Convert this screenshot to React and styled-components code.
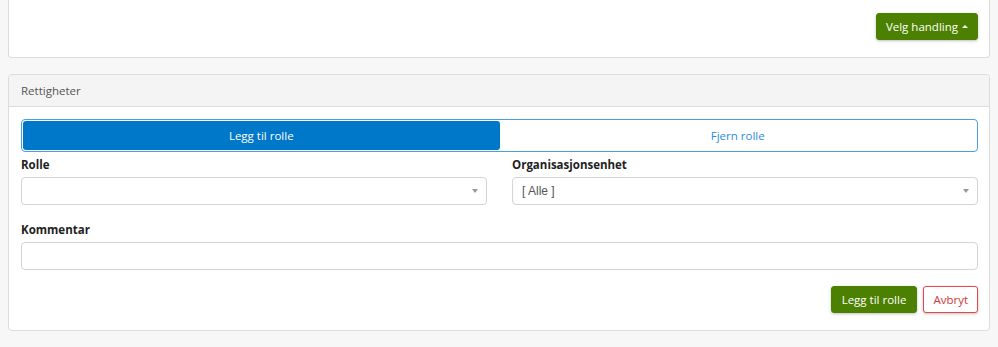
import React from "react";
import styled, { createGlobalStyle } from "styled-components";

const Global = createGlobalStyle`
  html, body { margin: 0; padding: 0; background: #f7f7f7; }
  body { font-family: "Open Sans", "Liberation Sans", sans-serif; font-size: 11.5px; color: #333; }
  * { box-sizing: border-box; }
`;

const Page = styled.div`
  padding: 0 8px;
  display: flex;
  flex-direction: column;
  gap: 16px;
`;

const ActionCard = styled.div`
  background: #fff;
  border: 1px solid #dcdcdc;
  border-top: 0;
  border-radius: 0 0 4px 4px;
  padding: 13px 11px 17px;
  display: flex;
  justify-content: flex-end;
`;

const Button = styled.button`
  font-family: "Open Sans", "Liberation Sans", sans-serif;
  font-size: 11.5px;
  height: 27px;
  padding: 0 ${(p) => p.$px || 10}px;
  border-radius: 3px;
  display: inline-flex;
  align-items: center;
  gap: 4px;
  cursor: pointer;
  background: ${(p) => (p.$variant === "danger" ? "#fff" : "#4c8000")};
  color: ${(p) => (p.$variant === "danger" ? "#d2373a" : "#fff")};
  border: 1px solid ${(p) => (p.$variant === "danger" ? "#df4a4d" : "#4c8000")};
  box-shadow: 0 1px 3px rgba(0, 0, 0, 0.25);
`;

const Caret = styled.span`
  width: 0;
  height: 0;
  border-left: 3px solid transparent;
  border-right: 3px solid transparent;
  ${(p) => (p.$up ? "border-bottom: 3px solid currentColor;" : "border-top: 4px solid #999;")}
`;

const Panel = styled.div`
  background: #fff;
  border: 1px solid #dcdcdc;
  border-radius: 4px;
`;

const PanelHeader = styled.div`
  background: #f4f4f4;
  border-bottom: 1px solid #dcdcdc;
  border-radius: 4px 4px 0 0;
  height: 32px;
  padding: 0 12px;
  display: flex;
  align-items: center;
  color: #555;
  font-size: 11.5px;
`;

const PanelBody = styled.div`
  padding: 12px 11px 17px 12px;
  display: flex;
  flex-direction: column;
`;

const Toggle = styled.div`
  border: 1px solid #4a9fe3;
  border-radius: 4px;
  padding: 1px;
  display: grid;
  grid-template-columns: 1fr 1fr;
  margin-bottom: 4px;
`;

const ToggleOption = styled.div`
  height: 29px;
  display: flex;
  align-items: center;
  justify-content: center;
  border-radius: 3px;
  font-size: 11.5px;
  background: ${(p) => (p.$active ? "#0078c9" : "#fff")};
  color: ${(p) => (p.$active ? "#fff" : "#2b8de0")};
`;

const Row = styled.div`
  display: grid;
  grid-template-columns: 1fr 1fr;
  gap: 25px;
  margin-bottom: 16px;
`;

const Field = styled.div`
  display: flex;
  flex-direction: column;
  margin-bottom: ${(p) => p.$mb || 0}px;
`;

const Label = styled.label`
  font-weight: 700;
  font-size: 11.5px;
  line-height: 18px;
  color: #222;
  margin-bottom: 3px;
`;

const Select = styled.div`
  height: 28px;
  border: 1px solid #d4d4d4;
  border-radius: 4px;
  background: #fff;
  display: flex;
  align-items: center;
  justify-content: space-between;
  padding: 0 8px 0 9px;
  font-family: "Liberation Sans", Arial, sans-serif;
  font-size: 12px;
  color: #555;
`;

const Input = styled.div`
  height: 28px;
  border: 1px solid #d4d4d4;
  border-radius: 4px;
  background: #fff;
`;

const Actions = styled.div`
  display: flex;
  justify-content: flex-end;
  gap: 6px;
`;

export default function App() {
  return (
    <>
      <Global />
      <Page>
        <ActionCard>
          <Button $px={9}>
            Velg handling <Caret $up />
          </Button>
        </ActionCard>
        <Panel>
          <PanelHeader>Rettigheter</PanelHeader>
          <PanelBody>
            <Toggle>
              <ToggleOption $active>Legg til rolle</ToggleOption>
              <ToggleOption>Fjern rolle</ToggleOption>
            </Toggle>
            <Row>
              <Field>
                <Label>Rolle</Label>
                <Select>
                  <span></span>
                  <Caret />
                </Select>
              </Field>
              <Field>
                <Label>Organisasjonsenhet</Label>
                <Select>
                  <span>[ Alle ]</span>
                  <Caret />
                </Select>
              </Field>
            </Row>
            <Field $mb={16}>
              <Label>Kommentar</Label>
              <Input />
            </Field>
            <Actions>
              <Button>Legg til rolle</Button>
              <Button $variant="danger" $px={9}>Avbryt</Button>
            </Actions>
          </PanelBody>
        </Panel>
      </Page>
    </>
  );
}
